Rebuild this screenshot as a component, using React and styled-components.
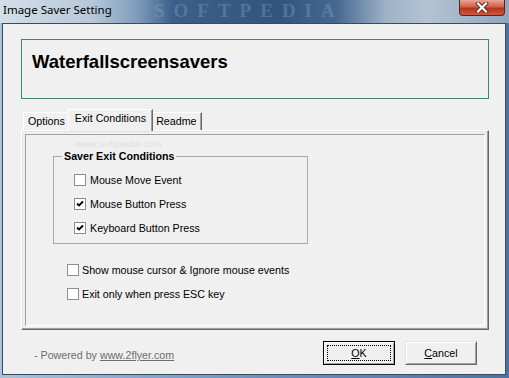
import styled, { createGlobalStyle } from "styled-components";

const Global = createGlobalStyle`
  body {
    margin: 0;
    background: #fff;
  }
  * {
    box-sizing: border-box;
  }
`;

const Window = styled.div`
  width: 509px;
  height: 378px;
  display: flex;
  flex-direction: column;
  background: linear-gradient(to right, #a9c2dd, #6f93bf 50%, #4d73a5);
  font-family: "Liberation Sans", Arial, sans-serif;
  font-size: 10.7px;
  color: #000;
  overflow: hidden;
`;

const TitleBar = styled.div`
  height: 23px;
  flex: none;
  position: relative;
  display: flex;
  align-items: flex-start;
  padding-left: 3px;
  overflow: hidden;
  background: linear-gradient(
    to right,
    #d3dee9 0%,
    #b7c8d9 18%,
    #7f9bbb 27%,
    #3c5f88 34%,
    #32557f 55%,
    #46688f 66%,
    #9fb3c8 76%,
    #b3c3d3 84%,
    #8fa6bf 100%
  );
`;

const Title = styled.span`
  font-family: "Noto Sans", "Liberation Sans", sans-serif;
  font-size: 11.5px;
  line-height: 20px;
  color: #000;
  position: relative;
  z-index: 1;
`;

const Watermark = styled.span`
  position: absolute;
  left: 154px;
  top: 0;
  font-family: "Liberation Serif", serif;
  font-weight: bold;
  font-size: 19px;
  line-height: 22px;
  letter-spacing: 9px;
  color: rgba(130, 162, 200, 0.4);
`;

const CloseButton = styled.div`
  margin-left: auto;
  margin-right: 4px;
  width: 46px;
  height: 16px;
  border: 1px solid #4b2a26;
  border-top: none;
  border-radius: 0 0 4px 4px;
  background: linear-gradient(#e9a597, #d0604a 45%, #b9321d 55%, #d05a3c);
  display: flex;
  align-items: center;
  justify-content: center;
  position: relative;
  z-index: 1;
`;

const Client = styled.div`
  flex: 1;
  margin: 0 3px 3px 2px;
  border: 1px solid #3b4a5c;
  background: #f0f0f0;
  padding: 15px 16px 0 18px;
  display: flex;
  flex-direction: column;
`;

const Header = styled.div`
  height: 60px;
  border: 1px solid #3f8383;
  padding: 10px 10px 0;
  font-family: "Liberation Sans", Arial, sans-serif;
  font-weight: bold;
  font-size: 18.5px;
  line-height: 24px;
`;

const TabRow = styled.div`
  margin-top: 10px;
  height: 21px;
  display: flex;
  align-items: flex-end;
  padding-left: 2px;
  position: relative;
  z-index: 1;
`;

const Tab = styled.div`
  height: ${(p) => (p.$active ? "22px" : "18px")};
  margin: ${(p) => (p.$active ? "0 -2px -1px" : "0")};
  padding: ${(p) => (p.$active ? "0 6px" : "0 4px")};
  line-height: 17px;
  border-top: 1px solid #fff;
  border-left: 1px solid #fff;
  border-right: 1px solid #696969;
  box-shadow: inset -1px 0 0 #a0a0a0;
  background: #f0f0f0;
  position: relative;
  z-index: ${(p) => (p.$active ? 2 : 0)};
  white-space: nowrap;
`;

const Panel = styled.div`
  height: 200px;
  border-top: 1px solid #fff;
  border-left: 1px solid #fff;
  border-right: 1px solid #696969;
  border-bottom: 1px solid #696969;
  box-shadow: inset -1px -1px 0 #a0a0a0, inset 1px 1px 0 #e3e3e3;
  padding: 3px;
  display: flex;
`;

const Inner = styled.div`
  flex: 1;
  position: relative;
  border-top: 1px solid #a0a0a0;
  border-left: 1px solid #a0a0a0;
  border-right: 1px solid #fff;
  border-bottom: 1px solid #fff;
  padding: 21px 0 0 27px;
`;

const SiteMark = styled.span`
  position: absolute;
  left: 49px;
  top: 3px;
  font-size: 9.5px;
  color: #dedede;
  letter-spacing: 0.3px;
`;

const GroupBox = styled.div`
  position: relative;
  width: 255px;
  border: 1px solid #a9a9a9;
  padding: 11px 0 3px 20px;
`;

const Legend = styled.span`
  position: absolute;
  left: 8px;
  top: -7px;
  padding: 0 2px;
  background: #f0f0f0;
  font-weight: bold;
  line-height: 13px;
`;

const OptionList = styled.div`
  margin: 14px 0 0 14px;
`;

const Row = styled.label`
  height: 24px;
  display: flex;
  align-items: center;
  gap: ${(p) => p.$gap || "3px"};
  white-space: nowrap;
`;

const Box = styled.span`
  width: 12px;
  height: 12px;
  flex: none;
  border: 1px solid #8f8f8f;
  background: #fff;
  display: flex;
  align-items: center;
  justify-content: center;
`;

const Footer = styled.div`
  margin-top: 11px;
  display: flex;
  align-items: center;
  padding: 0 12px 0 13px;
`;

const Powered = styled.span`
  color: #6d6d6d;
  margin-top: 4px;
  a {
    color: #6d6d6d;
    text-decoration: underline;
  }
`;

const Buttons = styled.div`
  margin-left: auto;
  display: flex;
  gap: 10px;
`;

const Button = styled.div`
  width: 72px;
  height: 24px;
  background: #f0f0f0;
  display: flex;
  align-items: center;
  justify-content: center;
  position: relative;
  border: 1px solid;
  border-color: ${(p) =>
    p.$default ? "#000" : "#e3e3e3 #696969 #696969 #e3e3e3"};
  box-shadow: inset 1px 1px 0 #fff, inset -1px -1px 0 #a0a0a0;
  u {
    text-decoration: underline;
  }
`;

const Focus = styled.span`
  position: absolute;
  inset: 3px;
  border: 1px dotted #000;
`;

function Check({ checked }) {
  return (
    <Box>
      {checked && (
        <svg width="8" height="8" viewBox="0 0 8 8">
          <path d="M1 3.5 L3 5.5 L7 1.5" fill="none" stroke="#000" strokeWidth="1.8" />
        </svg>
      )}
    </Box>
  );
}

function CheckRow({ checked, children, gap }) {
  return (
    <Row $gap={gap}>
      <Check checked={checked} />
      <span>{children}</span>
    </Row>
  );
}

export default function App() {
  return (
    <>
      <Global />
      <Window>
        <TitleBar>
          <Watermark>SOFTPEDIA</Watermark>
          <Title>Image Saver Setting</Title>
          <CloseButton>
            <svg width="14" height="11" viewBox="0 0 14 11">
              <path d="M3 1.5 L11 9.5 M11 1.5 L3 9.5" stroke="#5a2a22" strokeWidth="4" strokeLinecap="square" />
              <path d="M3 1.5 L11 9.5 M11 1.5 L3 9.5" stroke="#fff" strokeWidth="2.2" strokeLinecap="square" />
            </svg>
          </CloseButton>
        </TitleBar>
        <Client>
          <Header>Waterfallscreensavers</Header>
          <TabRow>
            <Tab>Options</Tab>
            <Tab $active>Exit Conditions</Tab>
            <Tab>Readme</Tab>
          </TabRow>
          <Panel>
            <Inner>
              <SiteMark>www.softpedia.com</SiteMark>
              <GroupBox>
                <Legend>Saver Exit Conditions</Legend>
                <CheckRow gap="4px">Mouse Move Event</CheckRow>
                <CheckRow gap="4px" checked>Mouse Button Press</CheckRow>
                <CheckRow gap="4px" checked>Keyboard Button Press</CheckRow>
              </GroupBox>
              <OptionList>
                <CheckRow>Show mouse cursor &amp; Ignore mouse events</CheckRow>
                <CheckRow>Exit only when press ESC key</CheckRow>
              </OptionList>
            </Inner>
          </Panel>
          <Footer>
            <Powered>
              - Powered by <a>www.2flyer.com</a>
            </Powered>
            <Buttons>
              <Button $default>
                <Focus />
                <span><u>O</u>K</span>
              </Button>
              <Button>
                <span><u>C</u>ancel</span>
              </Button>
            </Buttons>
          </Footer>
        </Client>
      </Window>
    </>
  );
}
